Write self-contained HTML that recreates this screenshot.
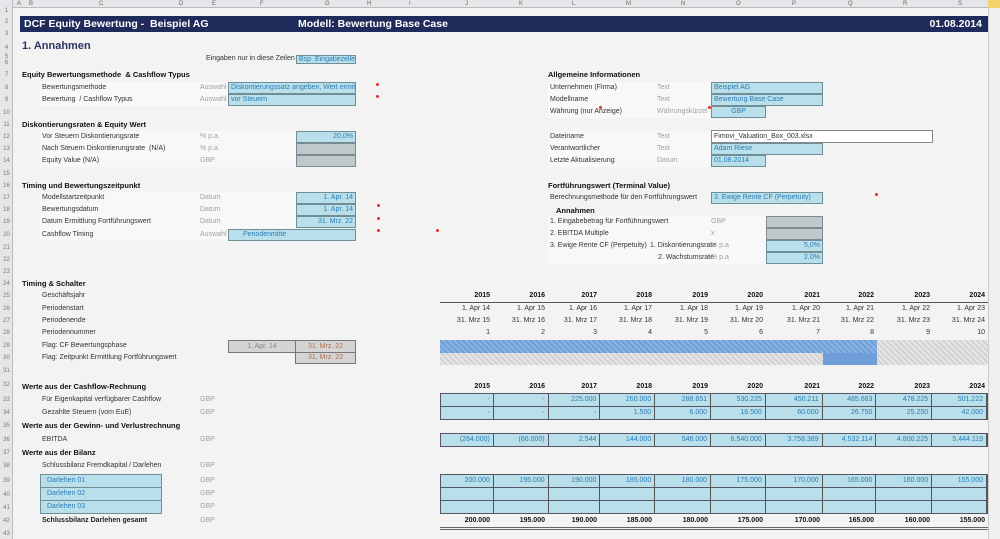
<!DOCTYPE html>
<html><head><meta charset="utf-8"><style>
*{margin:0;padding:0;box-sizing:border-box}
body{width:1000px;height:539px;overflow:hidden;background:#f3f3f3;font-family:"Liberation Sans",sans-serif;position:relative;color:#333}
div{position:absolute;white-space:nowrap}
.t{font-size:7px;line-height:12px;height:12px}
.g{color:#a0a0a0}
.h{font-size:7.5px;font-weight:bold;color:#111;line-height:12px}
.in{background:#b9e0ea;border:1px solid #6f8e98;color:#2b7cb6;font-size:7px;line-height:10px;padding:0 2px;overflow:hidden}
.gr{background:#bfc8cb;border:1px solid #7d8a8e}
.r{text-align:right}
.row{display:flex;left:440px;width:548px;font-size:7px;line-height:12px;height:12px}
.row span{display:block;text-align:right;padding-right:3px}
.w1{width:53px}.w2{width:55px}.w3{width:52px}.w4{width:55px}.w5{width:56px}.w6{width:55px}.w7{width:57px}.w8{width:54px}.w9{width:56px}.w10{width:55px}
.bx span{border-right:1px solid #555;color:#2b7cb6}
.bx{background:#b9e0ea;border:1px solid #556;}
.yr span{font-weight:bold;color:#111}
.rh{left:0;width:13px;font-size:6px;color:#777;text-align:center;line-height:8px}
.red{width:3px;height:3px;background:#e03030;border-radius:50%}
</style></head><body>
<!-- column header -->
<div style="left:0;top:0;width:1000px;height:8px;background:#e4e6e8;border-bottom:1px solid #b8bcc0"></div>
<div style="left:0;top:0;width:13px;height:539px;background:#e4e6e8;border-right:1px solid #b8bcc0"></div>
<div style="left:0;top:0;width:1000px;height:8px;font-size:6px;color:#666;line-height:8px">
<div style="left:17px">A</div><div style="left:29px">B</div><div style="left:99px">C</div><div style="left:179px">D</div><div style="left:212px">E</div><div style="left:260px">F</div><div style="left:325px">G</div><div style="left:367px">H</div><div style="left:409px">I</div><div style="left:465px">J</div><div style="left:519px">K</div><div style="left:572px">L</div><div style="left:626px">M</div><div style="left:681px">N</div><div style="left:736px">O</div><div style="left:792px">P</div><div style="left:848px">Q</div><div style="left:903px">R</div><div style="left:958px">S</div>
</div>
<div style="left:988px;top:0;width:12px;height:8px;background:#f3d36a"></div>
<div style="left:988px;top:8px;width:12px;height:531px;background:#f0f0f0;border-left:1px solid #ccc"></div>
<!-- row headers -->
<div class="rh" style="top:7px">1</div><div class="rh" style="top:18px">2</div><div class="rh" style="top:30px">3</div><div class="rh" style="top:44px">4</div><div class="rh" style="top:53px">5</div><div class="rh" style="top:59px">6</div><div class="rh" style="top:71px">7</div><div class="rh" style="top:84px">8</div><div class="rh" style="top:96px">9</div><div class="rh" style="top:109px">10</div><div class="rh" style="top:121px">11</div><div class="rh" style="top:133px">12</div><div class="rh" style="top:145px">13</div><div class="rh" style="top:157px">14</div><div class="rh" style="top:170px">15</div><div class="rh" style="top:182px">16</div><div class="rh" style="top:194px">17</div><div class="rh" style="top:206px">18</div><div class="rh" style="top:218px">19</div><div class="rh" style="top:231px">20</div><div class="rh" style="top:244px">21</div><div class="rh" style="top:256px">22</div><div class="rh" style="top:268px">23</div><div class="rh" style="top:280px">24</div><div class="rh" style="top:292px">25</div><div class="rh" style="top:305px">26</div><div class="rh" style="top:317px">27</div><div class="rh" style="top:329px">28</div><div class="rh" style="top:342px">29</div><div class="rh" style="top:354px">30</div><div class="rh" style="top:367px">31</div><div class="rh" style="top:381px">32</div><div class="rh" style="top:396px">33</div><div class="rh" style="top:409px">34</div><div class="rh" style="top:422px">35</div><div class="rh" style="top:436px">36</div><div class="rh" style="top:449px">37</div><div class="rh" style="top:462px">38</div><div class="rh" style="top:477px">39</div><div class="rh" style="top:491px">40</div><div class="rh" style="top:504px">41</div><div class="rh" style="top:517px">42</div><div class="rh" style="top:530px">43</div>

<!-- title bar -->
<div style="left:20px;top:16px;width:968px;height:16px;background:#1f2b5a;color:#fff;font-weight:bold;font-size:10.5px;line-height:16px">
<div style="left:4px">DCF Equity Bewertung -&nbsp; Beispiel AG</div>
<div style="left:278px">Modell: Bewertung Base Case</div>
<div style="right:6px">01.08.2014</div></div>
<div style="left:22px;top:40px;font-size:11px;font-weight:bold;color:#2a3560">1. Annahmen</div>

<div class="t" style="left:206px;top:53px">Eingaben nur in diese Zeilen</div>
<div class="in" style="left:296px;top:55px;width:60px;height:9px;line-height:7px">Bsp. Eingabezelle</div>

<div class="h" style="left:22px;top:69px">Equity Bewertungsmethode &nbsp;&amp; Cashflow Typus</div>
<div style="left:40px;top:82px;width:190px;height:24px;background:#f8f8f8"></div>
<div class="t" style="left:42px;top:82px">Bewertungsmethode</div><div class="t g" style="left:200px;top:82px">Auswahl</div>
<div class="in" style="left:228px;top:82px;width:128px;height:12px">Diskontierungssatz angeben, Wert ermitteln</div>
<div class="t" style="left:42px;top:94px">Bewertung &nbsp;/ Cashflow Typus</div><div class="t g" style="left:200px;top:94px">Auswahl</div>
<div class="in" style="left:228px;top:94px;width:128px;height:12px">vor Steuern</div>
<div class="red" style="left:376px;top:83px"></div><div class="red" style="left:376px;top:95px"></div>

<div class="h" style="left:22px;top:119px">Diskontierungsraten &amp; Equity Wert</div>
<div style="left:40px;top:131px;width:256px;height:36px;background:#f8f8f8"></div>
<div class="t" style="left:42px;top:131px">Vor Steuern Diskontierungsrate</div><div class="t g" style="left:200px;top:131px">% p.a.</div>
<div class="t" style="left:42px;top:143px">Nach Steuern Diskontierungsrate &nbsp;(N/A)</div><div class="t g" style="left:200px;top:143px">% p.a.</div>
<div class="t" style="left:42px;top:155px">Equity Value (N/A)</div><div class="t g" style="left:200px;top:155px">GBP</div>
<div class="in r" style="left:296px;top:131px;width:60px;height:12px">20,0%</div>
<div class="gr" style="left:296px;top:143px;width:60px;height:12px"></div>
<div class="gr" style="left:296px;top:155px;width:60px;height:12px"></div>

<div class="h" style="left:22px;top:180px">Timing und Bewertungszeitpunkt</div>
<div style="left:40px;top:192px;width:256px;height:48px;background:#f8f8f8"></div>
<div class="t" style="left:42px;top:192px">Modellstartzeitpunkt</div><div class="t g" style="left:200px;top:192px">Datum</div>
<div class="t" style="left:42px;top:204px">Bewertungsdatum</div><div class="t g" style="left:200px;top:204px">Datum</div>
<div class="t" style="left:42px;top:216px">Datum Ermittlung Fortführungswert</div><div class="t g" style="left:200px;top:216px">Datum</div>
<div class="t" style="left:42px;top:229px">Cashflow Timing</div><div class="t g" style="left:200px;top:229px">Auswahl</div>
<div class="in r" style="left:296px;top:192px;width:60px;height:12px">1. Apr. 14</div>
<div class="in r" style="left:296px;top:204px;width:60px;height:12px">1. Apr. 14</div>
<div class="in r" style="left:296px;top:216px;width:60px;height:12px">31. Mrz. 22</div>
<div class="in" style="left:228px;top:229px;width:128px;height:12px;padding-left:14px">Periodenmitte</div>
<div class="red" style="left:377px;top:204px"></div><div class="red" style="left:377px;top:217px"></div><div class="red" style="left:377px;top:229px"></div><div class="red" style="left:436px;top:229px"></div>

<!-- right blocks -->
<div class="h" style="left:548px;top:69px">Allgemeine Informationen</div>
<div style="left:548px;top:82px;width:163px;height:36px;background:#f8f8f8"></div>
<div class="t" style="left:550px;top:82px">Unternehmen (Firma)</div><div class="t g" style="left:657px;top:82px">Text</div>
<div class="t" style="left:550px;top:94px">Modellname</div><div class="t g" style="left:657px;top:94px">Text</div>
<div class="t" style="left:550px;top:106px">Währung (nur Anzeige)</div><div class="t g" style="left:657px;top:106px">Währungskürzel</div>
<div class="in" style="left:711px;top:82px;width:112px;height:12px">Beispiel AG</div>
<div class="in" style="left:711px;top:94px;width:112px;height:12px">Bewertung Base Case</div>
<div class="in" style="left:711px;top:106px;width:55px;height:12px;text-align:center">GBP</div>
<div class="red" style="left:599px;top:106px"></div><div class="red" style="left:708px;top:106px"></div>

<div style="left:548px;top:131px;width:163px;height:36px;background:#f8f8f8"></div>
<div class="t" style="left:550px;top:131px">Dateiname</div><div class="t g" style="left:657px;top:131px">Text</div>
<div class="t" style="left:550px;top:143px">Verantwortlicher</div><div class="t g" style="left:657px;top:143px">Text</div>
<div class="t" style="left:550px;top:155px">Letzte Aktualisierung</div><div class="t g" style="left:657px;top:155px">Datum</div>
<div style="left:711px;top:130px;width:222px;height:13px;background:#fff;border:1px solid #888;font-size:7px;line-height:11px;padding-left:2px">Fimovi_Valuation_Box_003.xlsx</div>
<div class="in" style="left:711px;top:143px;width:112px;height:12px">Adam Riese</div>
<div class="in" style="left:711px;top:155px;width:55px;height:12px">01.08.2014</div>

<div class="h" style="left:548px;top:180px">Fortführungswert (Terminal Value)</div>
<div class="t" style="left:550px;top:192px">Berechnungsmethode für den Fortführungswert</div>
<div class="in" style="left:711px;top:192px;width:112px;height:12px">3. Ewige Rente CF (Perpetuity)</div>
<div class="red" style="left:875px;top:193px"></div>
<div class="h" style="left:556px;top:205px">Annahmen</div>
<div style="left:548px;top:216px;width:218px;height:48px;background:#f8f8f8"></div>
<div class="t" style="left:550px;top:216px">1. Eingabebetrag für Fortführungswert</div><div class="t g" style="left:711px;top:216px">GBP</div>
<div class="t" style="left:550px;top:228px">2. EBITDA Multiple</div><div class="t g" style="left:711px;top:228px">x</div>
<div class="t" style="left:550px;top:240px">3. Ewige Rente CF (Perpetuity)</div><div class="t" style="left:650px;top:240px">1. Diskontierungsrate</div><div class="t g" style="left:711px;top:240px">% p.a</div>
<div class="t" style="left:658px;top:252px">2. Wachstumsrate</div><div class="t g" style="left:711px;top:252px">% p.a</div>
<div class="gr" style="left:766px;top:216px;width:57px;height:12px"></div>
<div class="gr" style="left:766px;top:228px;width:57px;height:12px"></div>
<div class="in r" style="left:766px;top:240px;width:57px;height:12px">5,0%</div>
<div class="in r" style="left:766px;top:252px;width:57px;height:12px">2,0%</div>

<!-- timing & schalter -->
<div class="h" style="left:22px;top:278px">Timing &amp; Schalter</div>
<div class="t" style="left:42px;top:290px">Geschäftsjahr</div>
<div class="t" style="left:42px;top:303px">Periodenstart</div>
<div class="t" style="left:42px;top:315px">Periodenende</div>
<div class="t" style="left:42px;top:327px">Periodennummer</div>
<div class="t" style="left:42px;top:340px">Flag: CF Bewertungsphase</div>
<div class="t" style="left:42px;top:352px">Flag: Zeitpunkt Ermittlung Fortführungswert</div>
<div class="row yr" style="top:290px"><span class="w1">2015</span><span class="w2">2016</span><span class="w3">2017</span><span class="w4">2018</span><span class="w5">2019</span><span class="w6">2020</span><span class="w7">2021</span><span class="w8">2022</span><span class="w9">2023</span><span class="w10">2024</span></div>
<div style="left:440px;top:302px;width:548px;height:1px;background:#555"></div>
<div class="row" style="top:303px"><span class="w1">1. Apr 14</span><span class="w2">1. Apr 15</span><span class="w3">1. Apr 16</span><span class="w4">1. Apr 17</span><span class="w5">1. Apr 18</span><span class="w6">1. Apr 19</span><span class="w7">1. Apr 20</span><span class="w8">1. Apr 21</span><span class="w9">1. Apr 22</span><span class="w10">1. Apr 23</span></div>
<div class="row" style="top:315px"><span class="w1">31. Mrz 15</span><span class="w2">31. Mrz 16</span><span class="w3">31. Mrz 17</span><span class="w4">31. Mrz 18</span><span class="w5">31. Mrz 19</span><span class="w6">31. Mrz 20</span><span class="w7">31. Mrz 21</span><span class="w8">31. Mrz 22</span><span class="w9">31. Mrz 23</span><span class="w10">31. Mrz 24</span></div>
<div class="row" style="top:327px"><span class="w1">1</span><span class="w2">2</span><span class="w3">3</span><span class="w4">4</span><span class="w5">5</span><span class="w6">6</span><span class="w7">7</span><span class="w8">8</span><span class="w9">9</span><span class="w10">10</span></div>
<div style="left:228px;top:340px;width:68px;height:13px;background:#d4d4d4;border:1px solid #777;font-size:7px;line-height:11px;text-align:center;color:#888">1. Apr. 14</div>
<div style="left:295px;top:340px;width:61px;height:13px;background:#d4d4d4;border:1px solid #777;font-size:7px;line-height:11px;text-align:center;color:#b07050">31. Mrz. 22</div>
<div style="left:295px;top:352px;width:61px;height:12px;background:#d4d4d4;border:1px solid #777;font-size:7px;line-height:10px;text-align:center;color:#b07050">31. Mrz. 22</div>
<div style="left:440px;top:340px;width:548px;height:25px;background:repeating-linear-gradient(45deg,#d2d2d2 0 2px,#e6e6e6 2px 4px)"></div>
<div style="left:440px;top:340px;width:437px;height:13px;background:repeating-linear-gradient(45deg,#6e9fd8 0 2px,#8ab3e2 2px 4px)"></div>
<div style="left:823px;top:353px;width:54px;height:12px;background:#6e9fd8"></div>

<!-- cashflow -->
<div class="h" style="left:22px;top:381px">Werte aus der Cashflow-Rechnung</div>
<div class="row yr" style="top:381px"><span class="w1">2015</span><span class="w2">2016</span><span class="w3">2017</span><span class="w4">2018</span><span class="w5">2019</span><span class="w6">2020</span><span class="w7">2021</span><span class="w8">2022</span><span class="w9">2023</span><span class="w10">2024</span></div>
<div class="t" style="left:42px;top:394px">Für Eigenkapital verfügbarer Cashflow</div><div class="t g" style="left:200px;top:394px">GBP</div>
<div class="t" style="left:42px;top:407px">Gezahlte Steuern (vom EuE)</div><div class="t g" style="left:200px;top:407px">GBP</div>
<div class="row bx" style="top:393px;height:14px"><span class="w1">-</span><span class="w2">-</span><span class="w3">225.000</span><span class="w4">260.000</span><span class="w5">288.651</span><span class="w6">530.225</span><span class="w7">450.211</span><span class="w8">485.663</span><span class="w9">478.225</span><span class="w10">501.222</span></div>
<div class="row bx" style="top:406px;height:14px"><span class="w1">-</span><span class="w2">-</span><span class="w3">-</span><span class="w4">1.500</span><span class="w5">6.000</span><span class="w6">16.500</span><span class="w7">60.000</span><span class="w8">26.750</span><span class="w9">25.250</span><span class="w10">42.000</span></div>

<div class="h" style="left:22px;top:420px">Werte aus der Gewinn- und Verlustrechnung</div>
<div class="t" style="left:42px;top:434px">EBITDA</div><div class="t g" style="left:200px;top:434px">GBP</div>
<div class="row bx" style="top:433px;height:14px"><span class="w1">(264.000)</span><span class="w2">(66.000)</span><span class="w3">2.544</span><span class="w4">144.000</span><span class="w5">546.000</span><span class="w6">6.540.000</span><span class="w7">3.758.389</span><span class="w8">4.532.114</span><span class="w9">4.800.225</span><span class="w10">5.444.119</span></div>

<div class="h" style="left:22px;top:447px">Werte aus der Bilanz</div>
<div class="t" style="left:42px;top:460px">Schlussbilanz Fremdkapital / Darlehen</div><div class="t g" style="left:200px;top:460px">GBP</div>
<div class="in" style="left:40px;top:474px;width:122px;height:14px;line-height:12px;padding-left:6px">Darlehen 01</div>
<div class="in" style="left:40px;top:487px;width:122px;height:14px;line-height:12px;padding-left:6px">Darlehen 02</div>
<div class="in" style="left:40px;top:500px;width:122px;height:14px;line-height:12px;padding-left:6px">Darlehen 03</div>
<div class="t g" style="left:200px;top:475px">GBP</div><div class="t g" style="left:200px;top:488px">GBP</div><div class="t g" style="left:200px;top:501px">GBP</div>
<div class="row bx" style="top:474px;height:14px"><span class="w1">200.000</span><span class="w2">195.000</span><span class="w3">190.000</span><span class="w4">185.000</span><span class="w5">180.000</span><span class="w6">175.000</span><span class="w7">170.000</span><span class="w8">165.000</span><span class="w9">160.000</span><span class="w10">155.000</span></div>
<div class="row bx" style="top:487px;height:14px"><span class="w1"></span><span class="w2"></span><span class="w3"></span><span class="w4"></span><span class="w5"></span><span class="w6"></span><span class="w7"></span><span class="w8"></span><span class="w9"></span><span class="w10"></span></div>
<div class="row bx" style="top:500px;height:14px"><span class="w1"></span><span class="w2"></span><span class="w3"></span><span class="w4"></span><span class="w5"></span><span class="w6"></span><span class="w7"></span><span class="w8"></span><span class="w9"></span><span class="w10"></span></div>
<div class="t" style="left:42px;top:515px;font-weight:bold;color:#222">Schlussbilanz Darlehen gesamt</div><div class="t g" style="left:200px;top:515px">GBP</div>
<div class="row yr" style="top:515px"><span class="w1">200.000</span><span class="w2">195.000</span><span class="w3">190.000</span><span class="w4">185.000</span><span class="w5">180.000</span><span class="w6">175.000</span><span class="w7">170.000</span><span class="w8">165.000</span><span class="w9">160.000</span><span class="w10">155.000</span></div>
<div style="left:440px;top:527px;width:548px;height:3px;border-top:1px solid #666;border-bottom:1px solid #666"></div>
</body></html>
